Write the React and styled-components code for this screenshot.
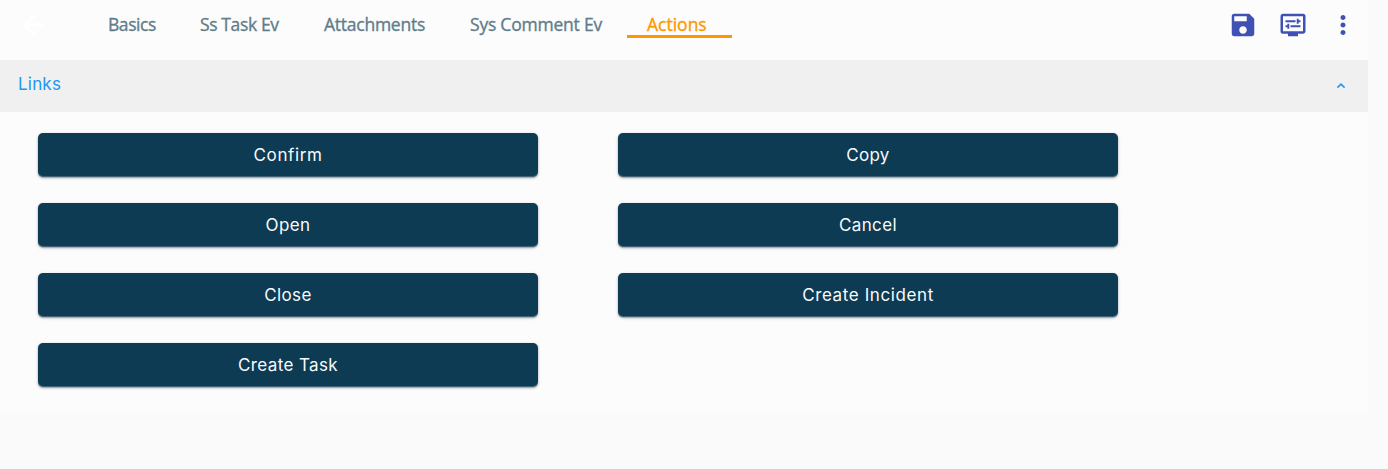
import React from "react";
import styled, { createGlobalStyle } from "styled-components";
import { MdOutlineDisplaySettings, MdMoreVert } from "react-icons/md";

const GlobalStyle = createGlobalStyle`
  * { box-sizing: border-box; }
  body { margin: 0; background: #fafafa; }
`;

const Panel = styled.main`
  width: 1368px;
  height: 412px;
  background: #fcfcfc;
`;

const Toolbar = styled.header`
  display: flex;
  align-items: center;
  height: 60px;
  padding: 0 10px 10px 18px;
`;

const BackButton = styled.button`
  display: flex;
  width: 30px;
  height: 30px;
  padding: 0;
  border: 0;
  background: none;
  color: #fff;
`;

const Tabs = styled.nav`
  display: flex;
  flex: 1;
  height: 28px;
  margin-left: 40px;
`;

const Tab = styled.a`
  width: ${(p) => p.$width}px;
  height: 27px;
  padding-left: 20px;
  border-bottom: 3px solid ${(p) => (p.$active ? "#ff9800" : "transparent")};
  color: ${(p) => (p.$active ? "#ff9800" : "#607d8b")};
  font: 500 17.5px/27px "Open Sans", "Noto Sans", sans-serif;
  -webkit-text-stroke: 0.35px currentColor;
  letter-spacing: ${(p) => p.$spacing}px;
  white-space: nowrap;
`;

const Tools = styled.div`
  display: flex;
  gap: 20px;
  color: #3f51b5;
`;

const ToolButton = styled.button`
  display: flex;
  width: 30px;
  height: 30px;
  padding: 0;
  border: 0;
  background: none;
  color: inherit;
`;

const SectionHeader = styled.div`
  display: flex;
  align-items: center;
  justify-content: space-between;
  height: 52px;
  padding: 0 19px 4px 18px;
  background: #f0f0f0;
  color: #2196f3;
  font: 400 17px/24px Inter, sans-serif;
  letter-spacing: 0.2px;
`;

const Chevron = styled.svg`
  width: 16px;
  height: 16px;
  margin-top: 3px;
`;

const Grid = styled.div`
  display: grid;
  grid-template-columns: 500px 500px;
  grid-auto-rows: 44px;
  gap: 26px 80px;
  padding: 21px 38px;
`;

const ActionButton = styled.button`
  padding: 0;
  border: 0;
  border-radius: 5px;
  background: #0e3b54;
  box-shadow: inset 0 -1px 0 rgba(255, 255, 255, 0.2), 0 1px 3px rgba(0, 0, 0, 0.3), 0 1px 1px rgba(0, 0, 0, 0.16);
  color: #fafafa;
  font: 400 17px/44px Inter, sans-serif;
  letter-spacing: ${(p) => p.$spacing}px;
`;

const tabs = [
  { label: "Basics", width: 92, spacing: -0.45 },
  { label: "Ss Task Ev", width: 124, spacing: -0.38 },
  { label: "Attachments", width: 146, spacing: -0.25 },
  { label: "Sys Comment Ev", width: 177, spacing: -0.22 },
  { label: "Actions", width: 105, spacing: 0, active: true },
];

const actions = [
  { label: "Confirm", spacing: 0.6 },
  { label: "Copy", spacing: 0.3 },
  { label: "Open", spacing: 0.4 },
  { label: "Cancel", spacing: 0.35 },
  { label: "Close", spacing: 0.4 },
  { label: "Create Incident", spacing: 0.6 },
  { label: "Create Task", spacing: 0.38 },
];

export default function App() {
  return (
    <>
      <GlobalStyle />
      <Panel>
        <Toolbar>
          <BackButton aria-label="Back">
            <svg width="30" height="30" viewBox="0 0 24 24" fill="none" stroke="currentColor" strokeWidth="2.5" strokeLinecap="round" strokeLinejoin="round">
              <path d="M19.5 12H5.5M12.5 4.5L5 12l7.5 7.5" />
            </svg>
          </BackButton>
          <Tabs>
            {tabs.map((t) => (
              <Tab key={t.label} $width={t.width} $spacing={t.spacing} $active={t.active}>{t.label}</Tab>
            ))}
          </Tabs>
          <Tools>
            <ToolButton aria-label="Save">
              <svg width="30" height="30" viewBox="0 0 24 24" fill="currentColor">
                <path d="M17 3H5a2 2 0 0 0-2 2v14c0 1.1.9 2 2 2h14c1.1 0 2-.9 2-2V7l-4-4zm-5 16c-1.66 0-3-1.34-3-3s1.34-3 3-3 3 1.34 3 3-1.34 3-3 3zm3-10H5V5h10v4z" />
              </svg>
            </ToolButton>
            <ToolButton aria-label="Display settings"><MdOutlineDisplaySettings size={30} /></ToolButton>
            <ToolButton aria-label="More"><MdMoreVert size={30} /></ToolButton>
          </Tools>
        </Toolbar>
        <SectionHeader>
          <span>Links</span>
          <Chevron viewBox="0 0 16 16" fill="none" stroke="currentColor" strokeWidth="1.6">
            <path d="M4.4 9.6L8 6.2l3.6 3.4" />
          </Chevron>
        </SectionHeader>
        <Grid>
          {actions.map((a) => (
            <ActionButton key={a.label} $spacing={a.spacing}>{a.label}</ActionButton>
          ))}
        </Grid>
      </Panel>
    </>
  );
}
